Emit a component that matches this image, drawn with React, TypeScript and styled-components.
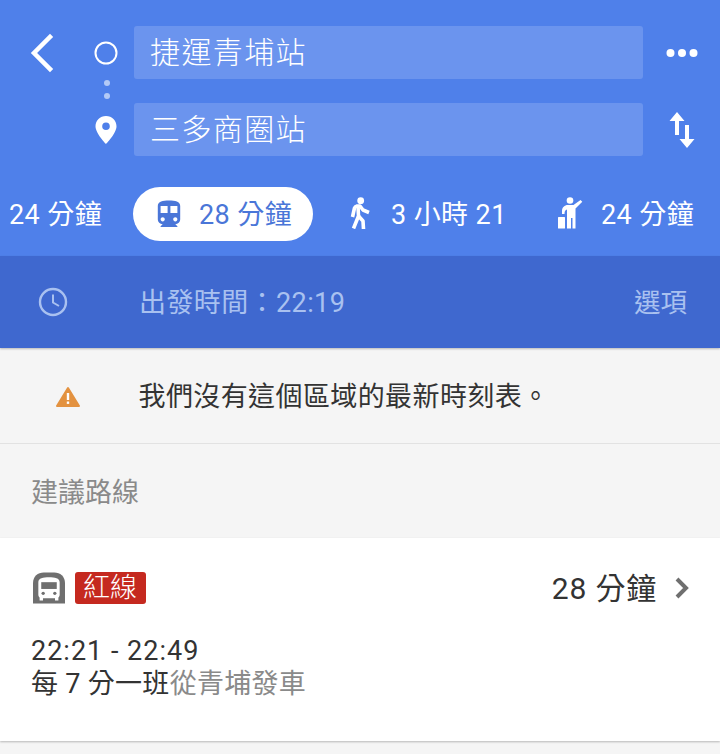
import styled, { createGlobalStyle } from 'styled-components';

const Global = createGlobalStyle`
  html, body { margin: 0; padding: 0; background: #f5f5f5; }
  body { font-family: Roboto, "Noto Sans CJK TC", sans-serif; }
  * { box-sizing: border-box; }
`;

const Page = styled.div`
  width: 720px;
  height: 754px;
  overflow: hidden;
  background: #f5f5f5;
`;

const Header = styled.header`
  height: 256px;
  background: #4f80ea;
  padding-top: 26px;
`;

const RouteGrid = styled.div`
  display: grid;
  grid-template-columns: 134px 509px 77px;
  grid-template-rows: 53px 24px 53px;
`;

const Cell = styled.div`
  display: flex;
  align-items: center;
  justify-content: center;
`;

const BackCell = styled(Cell)`
  justify-content: flex-start;
  padding-left: 29px;
`;

const Marker = styled.div<{ $offset: number }>`
  width: 42px;
  margin-left: ${(p) => p.$offset}px;
  display: flex;
  justify-content: center;
`;

const Field = styled.div`
  background: #6b94ee;
  border-radius: 3px;
  color: #fff;
  font-size: 30px;
  font-weight: 300;
  letter-spacing: 1.4px;
  line-height: 53px;
  padding-left: 16px;
`;

const Dots = styled.div`
  grid-column: 1 / 4;
  padding: 0 0 4px 104px;
  display: flex;
  flex-direction: column;
  justify-content: center;
  gap: 7px;
  i {
    display: block;
    width: 6px;
    height: 6px;
    border-radius: 50%;
    background: #b3c9f6;
  }
`;

const Tabs = styled.nav`
  display: flex;
  align-items: center;
  height: 54px;
  margin-top: 31px;
  padding-left: 9px;
  color: #fff;
`;

const Tab = styled.div<{ $active?: boolean; $width: number; $inset?: number }>`
  display: flex;
  align-items: center;
  flex: none;
  width: ${(p) => p.$width}px;
  height: 54px;
  padding-left: ${(p) => p.$inset || 0}px;
  padding-bottom: 3px;
  font-size: 27px;
  letter-spacing: 0.4px;
  white-space: nowrap;
  ${(p) =>
    p.$active &&
    `
    background: #fff;
    color: #4a76d8;
    border-radius: 27px;
  `}
`;

const TabIcon = styled.svg<{ $gap: number }>`
  flex: none;
  margin-right: ${(p) => p.$gap}px;
`;

const TimeBar = styled.div`
  height: 92px;
  background: #3f68cf;
  display: flex;
  align-items: center;
  color: #a9c1f0;
  font-size: 27px;
  letter-spacing: 0.4px;
  box-shadow: 0 1px 2px rgba(0, 0, 0, 0.25);
  position: relative;
  padding: 0 33px 3px 0;
`;

const IconSlot = styled.div`
  width: 139px;
  padding: 2px 0 0 38px;
  display: flex;
  align-items: center;
`;

const TimeLabel = styled.div`
  flex: 1;
`;

const OptionsLink = styled.span`
  font-size: 26.500px;
  letter-spacing: 0;
`;

const Notice = styled.div`
  height: 96px;
  display: flex;
  align-items: center;
  border-bottom: 1px solid #e2e2e2;
  color: #333;
  font-size: 27px;
  letter-spacing: 0.4px;
  padding-top: 1px;
  padding-bottom: 4px;
`;

const NoticeIcon = styled.div`
  width: 138.500px;
  padding: 4px 0 0 56px;
  display: flex;
  align-items: center;
`;

const SectionTitle = styled.div`
  height: 94px;
  padding: 29px 0 0 31px;
  color: #8a8a8a;
  font-size: 27px;
  line-height: 40px;
`;

const RouteCard = styled.section`
  height: 203px;
  background: #fff;
  box-shadow: 0 1px 2px rgba(0, 0, 0, 0.25);
  padding: 33px 30px 0 31px;
`;

const CardTop = styled.div`
  display: flex;
  align-items: center;
  height: 33px;
`;

const ModeIcon = styled.svg`
  display: block;
  margin-left: 2px;
`;

const LineBadge = styled.span`
  background: #c5291f;
  color: #fff;
  font-size: 27px;
  font-weight: 300;
  line-height: 32px;
  height: 32px;
  padding: 0 9px 0 8px;
  border-radius: 3px;
  margin-left: 10px;
`;

const Duration = styled.div`
  margin-left: auto;
  color: #333;
  font-size: 30px;
  letter-spacing: 0.8px;
  display: flex;
  align-items: center;
  gap: 17px;
  span {
    margin-top: -3px;
  }
`;

const Times = styled.div`
  margin-top: 31px;
  font-size: 27px;
  line-height: 33px;
  color: #333;
`;

const TimeRange = styled.div`
  letter-spacing: 1px;
`;

const Frequency = styled.div`
  letter-spacing: 0.3px;
`;

const Muted = styled.span`
  color: #8a8a8a;
`;

const Glyph = styled.svg`
  display: block;
`;

const TrainPath =
  'M12 2c-4.42 0-8 .5-8 4v9.5C4 17.43 5.57 19 7.5 19L6 20.5v.5h12v-.5L16.5 19c1.93 0 3.5-1.57 3.5-3.5V6c0-3.5-3.58-4-8-4zM7.5 17c-.83 0-1.5-.67-1.5-1.5S6.67 14 7.5 14s1.5.67 1.5 1.5S8.33 17 7.5 17zm3.5-6H6V6h5v5zm5.5 6c-.83 0-1.5-.67-1.5-1.5s.67-1.5 1.5-1.5 1.5.67 1.5 1.5-.67 1.5-1.5 1.5zm1.5-6h-5V6h5v5z';

export default function App() {
  return (
    <Page>
      <Global />
      <Header>
        <RouteGrid>
          <BackCell>
            <Glyph width="26" height="40" viewBox="0 0 26 40" fill="none" stroke="#fff" strokeWidth="4.500" strokeLinecap="square">
              <path d="M21 4 L5 20 L21 36" />
            </Glyph>
            <Marker $offset={30}>
              <Glyph width="24" height="24" viewBox="0 0 24 24" fill="none" stroke="#fff" strokeWidth="2">
                <circle cx="12" cy="12" r="10.500" />
              </Glyph>
            </Marker>
          </BackCell>
          <Field>捷運青埔站</Field>
          <Cell>
            <Glyph width="32" height="10" viewBox="0 0 32 10" fill="#fff">
              <circle cx="4.500" cy="5" r="4" />
              <circle cx="16" cy="5" r="4" />
              <circle cx="27.500" cy="5" r="4" />
            </Glyph>
          </Cell>
          <Dots>
            <i />
            <i />
          </Dots>
          <BackCell>
            <Marker $offset={56}>
              <Glyph width="22" height="28" viewBox="0 0 22 28">
                <path fillRule="evenodd" fill="#fff" d="M11 0C5 0 .5 4.6.5 10.3.5 17.5 11 28 11 28s10.500-10.500 10.500-17.700C21.500 4.600 17 0 11 0zm0 14a3.800 3.800 0 1 1 0-7.600 3.800 3.800 0 0 1 0 7.600z" />
              </Glyph>
            </Marker>
          </BackCell>
          <Field>三多商圈站</Field>
          <Cell>
            <Glyph width="28" height="36" viewBox="0 0 28 36" fill="#fff">
              <path d="M9 0 L16.500 9 L11 9 L11 23 L7 23 L7 9 L1.500 9 Z" />
              <path d="M19 36 L11.500 27 L17 27 L17 13 L21 13 L21 27 L26.500 27 Z" />
            </Glyph>
          </Cell>
        </RouteGrid>
        <Tabs>
          <Tab $width={124}>24 分鐘</Tab>
          <Tab $active $width={180} $inset={22}>
            <TabIcon $gap={16} width="28" height="28" viewBox="2 1 20 20" fill="#4a76d8">
              <path d={TrainPath} />
            </TabIcon>
            28 分鐘
          </Tab>
          <Tab $width={245} $inset={36}>
            <TabIcon $gap={20} width="22" height="32" viewBox="0 0 22 32" fill="none" stroke="#fff" strokeWidth="3.600" strokeLinejoin="round">
              <circle cx="11.700" cy="3.700" r="3.400" fill="#fff" stroke="none" />
              <path d="M3.500 20 L5.500 11 Q6 9.500 8 9 L11 9 L14 13 L20 15.500" />
              <path d="M9 9 L9.500 19 L4.500 31.500" />
              <path d="M9.500 19 L14 24 L14.500 32" />
            </TabIcon>
            3 小時 21
          </Tab>
          <Tab $width={160}>
            <TabIcon $gap={17} width="26" height="32" viewBox="0 0 26 32" fill="#fff">
              <circle cx="12" cy="3.500" r="3.300" />
              <path d="M4 17V14c0-3.500 2.500-6 6-6h5.500L22.500 3l1.800 1.800L17.500 11.500V31.500h-3V21h-1.500v10.500H9V12.500c-1.500.5-2.500 1.500-2.500 4.500z" />
              <rect x="0" y="20" width="7" height="11.500" rx="0.500" />
            </TabIcon>
            24 分鐘
          </Tab>
        </Tabs>
      </Header>
      <TimeBar>
        <IconSlot>
          <Glyph width="30" height="30" viewBox="0 0 30 30" fill="none" stroke="#a9c1f0" strokeWidth="2.400">
            <circle cx="15" cy="15" r="13" />
            <path d="M15 7.500V15.500L21 19" strokeWidth="2" />
          </Glyph>
        </IconSlot>
        <TimeLabel>出發時間：22:19</TimeLabel>
        <OptionsLink>選項</OptionsLink>
      </TimeBar>
      <Notice>
        <NoticeIcon>
          <Glyph width="24" height="21" viewBox="0 0 24 21">
            <path fill="#e39240" stroke="#e39240" strokeWidth="2" strokeLinejoin="round" d="M12 2 L23 20 L1 20 Z" />
            <rect x="10.800" y="7" width="2.400" height="7" fill="#fff" />
            <rect x="10.800" y="15.500" width="2.400" height="2.400" fill="#fff" />
          </Glyph>
        </NoticeIcon>
        我們沒有這個區域的最新時刻表。
      </Notice>
      <SectionTitle>建議路線</SectionTitle>
      <RouteCard>
        <CardTop>
          <ModeIcon width="32" height="32" viewBox="0 0 33 32">
            <path fill="#6f6f6f" d="M0 32V11C0 4 5 0 11 0H22c6 0 11 4 11 11V32Z" />
            <path fill="#fff" d="M16.500 5c-6 0-11 1-11 5v13c0 1.200.5 2.200 1.300 2.800V29h3.500v-2.500h12.400V29h3.500v-3.200c.8-.6 1.300-1.600 1.300-2.800V10c0-4-5-5-11-5z" />
            <path fill="#6f6f6f" d="M8.500 10h16v7h-16z" />
            <circle cx="10.500" cy="21.500" r="1.700" fill="#6f6f6f" />
            <circle cx="22.500" cy="21.500" r="1.700" fill="#6f6f6f" />
          </ModeIcon>
          <LineBadge>紅線</LineBadge>
          <Duration>
            <span>28 分鐘</span>
            <Glyph width="16" height="24" viewBox="0 0 16 24" fill="none" stroke="#6f6f6f" strokeWidth="4">
              <path d="M3 3 L12 12 L3 21" />
            </Glyph>
          </Duration>
        </CardTop>
        <Times>
          <TimeRange>22:21 - 22:49</TimeRange>
          <Frequency>
            每 7 分一班<Muted>從青埔發車</Muted>
          </Frequency>
        </Times>
      </RouteCard>
    </Page>
  );
}
